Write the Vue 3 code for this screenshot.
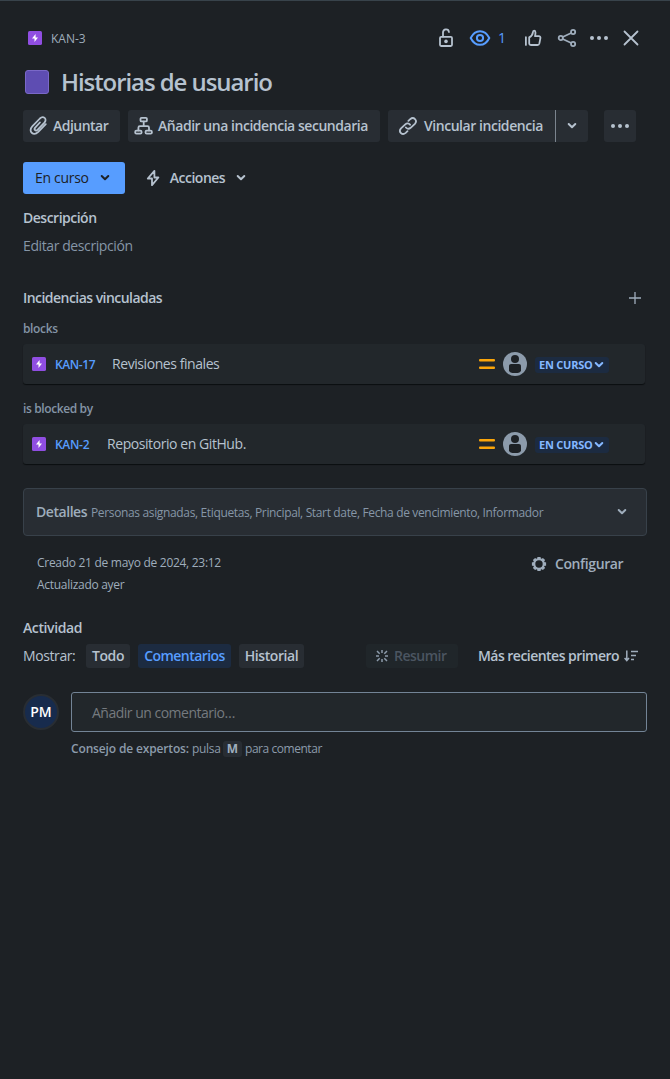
<script setup>
const groups = [
  { relation: 'blocks', relClass: 'rel-a', issueKey: 'KAN-17', keyClass: 'key-a', summary: 'Revisiones finales', sumClass: 'sum-a' },
  { relation: 'is blocked by', relClass: 'rel-b', issueKey: 'KAN-2', keyClass: 'key-b', summary: 'Repositorio en GitHub.', sumClass: 'sum-b' },
]
const boltPath = 'M7.6 3 4 7.6h2.5v3.4L10 6.4H7.6z'
const gearTeeth = [0, 45, 90, 135, 180, 225, 270, 315]
</script>

<template>
  <main class="issue">
    <header class="topbar">
      <svg class="epic" width="14" height="14" viewBox="0 0 14 14"><rect width="14" height="14" rx="1.6" /><path :d="boltPath" /></svg>
      <span class="crumb">KAN-3</span>
      <div class="tools">
        <svg width="16" height="20" viewBox="0 0 16 20" class="line"><rect x="2" y="8.9" width="12" height="9.1" rx="1.2" /><path d="M5 8.6V4.6C5 .4 10.6.4 10.9 4" /><circle class="solid" cx="8" cy="13.4" r="1.8" /></svg>
        <svg width="22" height="18" viewBox="0 0 22 18" class="line blue"><path d="M1.700 9C6.200 -.1 15.800 -.1 20.300 9 15.800 18.100 6.200 18.100 1.700 9z" /><circle cx="11" cy="9" r="3.1" /></svg>
        <span class="watchers">1</span>
        <svg width="18" height="18" viewBox="0 0 18 18" class="line thumb"><path d="M1.9 8.2v7.7M5.2 8.400c2-1 3.500-2.600 3.700-5 .1-1.300.5-1.700 1.200-1.700 1.700 0 1.600 2.600.9 5.500h3.700c1.400 0 1.900.9 1.700 2l-1 5.200c-.3 1.200-.9 1.600-2 1.600H7.200c-1.300 0-2-.7-2-1.800z" /></svg>
        <svg width="20" height="20" viewBox="0 0 20 20" class="line share"><circle cx="3.800" cy="10" r="2.100" /><circle cx="16.100" cy="4" r="2.100" /><circle cx="16.100" cy="16" r="2.100" /><path d="M5.700 9 14.200 5M5.700 11l8.500 4" /></svg>
        <svg width="20" height="6" viewBox="0 0 20 6" class="dots"><circle cx="3" cy="3" r="2" /><circle cx="10" cy="3" r="2" /><circle cx="17" cy="3" r="2" /></svg>
        <svg width="16" height="16" viewBox="0 0 16 16" class="line close"><path d="m1.500 1.500 13 13m0-13-13 13" /></svg>
      </div>
    </header>

    <div class="heading">
      <span class="swatch"></span>
      <h1>Historias de usuario</h1>
    </div>

    <div class="actions">
      <button class="btn attach">
        <svg width="20" height="20" viewBox="0 0 20 20" class="line"><path d="m10.900 6.500-4.700 5.100c-1.700 2 .5 3.900 2.300 2.200l6.900-7.200c3.300-3.800-1.200-7.300-4.500-4.100L3.500 10.200c-5 5.300 1 10.300 5.800 5.600l7.500-7.700" /></svg>
        <span>Adjuntar</span>
      </button>
      <button class="btn child">
        <svg width="20" height="20" viewBox="0 0 20 20" class="line"><rect x="6.500" y="1.800" width="6.400" height="3.600" rx="1" /><rect x="1.200" y="14.700" width="6.400" height="3" rx="1.200" /><rect x="11.500" y="14.700" width="6.400" height="3" rx="1.200" /><path d="M9.700 5.700v4.400M4.400 14.400v-2.700c0-1 .5-1.500 1.500-1.500h7.600c1 0 1.500.5 1.500 1.500v2.700" /></svg>
        <span>Añadir una incidencia secundaria</span>
      </button>
      <div class="split">
        <button class="btn link">
          <svg width="20" height="20" viewBox="0 0 20 20" class="line"><path d="M7.900 11.500c1.200 1.500 3.100 1.700 4.700.3l4.300-4c3-3.400-1.200-7.600-4.700-4.600L10.400 4.900M12 8.700C10.700 7.200 8.800 7 7.300 8.400L3 12.400c-3 3.400 1.300 7.500 4.700 4.500l1.800-1.700" /></svg>
          <span>Vincular incidencia</span>
        </button>
        <button class="btn caret"><svg width="10" height="8" viewBox="0 0 10 8" class="chev"><path d="m1.700 2 3.300 3.300L8.300 2" /></svg></button>
      </div>
      <button class="btn more"><svg width="20" height="6" viewBox="0 0 20 6" class="dots"><circle cx="3" cy="3" r="2" /><circle cx="10" cy="3" r="2" /><circle cx="17" cy="3" r="2" /></svg></button>
    </div>

    <div class="workflow">
      <button class="status"><span>En curso</span><svg width="10" height="8" viewBox="0 0 10 8" class="chev"><path d="m1.700 2 3.300 3.300L8.300 2" /></svg></button>
      <button class="auto">
        <svg width="14" height="18" viewBox="0 0 14 18" class="line"><path d="M8.400 1.800 1.800 9.500H6v6.700l6.400-7.700H8.400z" /></svg>
        <span>Acciones</span>
        <svg width="10" height="8" viewBox="0 0 10 8" class="chev"><path d="m1.700 2 3.300 3.300L8.300 2" /></svg>
      </button>
    </div>

    <section class="description">
      <h2 class="h-desc">Descripción</h2>
      <p>Editar descripción</p>
    </section>

    <section class="linked">
      <div class="linked-head">
        <h2 class="h-linked">Incidencias vinculadas</h2>
        <svg width="12" height="12" viewBox="0 0 12 12" class="plus"><path d="M6 0v12M0 6h12" /></svg>
      </div>
      <div v-for="g in groups" :key="g.issueKey" class="group">
        <h3><span :class="g.relClass">{{ g.relation }}</span></h3>
        <div class="card">
          <svg class="epic" width="14" height="14" viewBox="0 0 14 14"><rect width="14" height="14" rx="1.6" /><path :d="boltPath" /></svg>
          <span class="key" :class="g.keyClass">{{ g.issueKey }}</span>
          <span class="summary" :class="g.sumClass">{{ g.summary }}</span>
          <svg class="priority" width="16" height="12" viewBox="0 0 16 12"><rect y="1" width="16" height="2.500" rx="1" /><rect y="8.500" width="16" height="2.500" rx="1" /></svg>
          <svg class="person" width="24" height="24" viewBox="0 0 24 24"><circle class="bg" cx="12" cy="12" r="12" /><circle cx="12" cy="7" r="4" /><path d="M6 14.200c0-1.500.8-2.200 2.200-2.200h7.600c1.400 0 2.200.7 2.200 2.200v4c0 1.900-2.300 2.900-6 2.900s-6-1-6-2.900z" /></svg>
          <span class="lozenge"><span>EN CURSO</span><svg width="10" height="8" viewBox="0 0 10 8" class="chev"><path d="m1.700 2 3.300 3.300L8.300 2" /></svg></span>
        </div>
      </div>
    </section>

    <section class="details">
      <h2>Detalles</h2>
      <span class="fields">Personas asignadas, Etiquetas, Principal, Start date, Fecha de vencimiento, Informador</span>
      <svg width="10" height="8" viewBox="0 0 10 8" class="chev"><path d="m1.700 2 3.300 3.300L8.300 2" /></svg>
    </section>

    <div class="meta">
      <div class="dates">
        <span class="created">Creado 21 de mayo de 2024, 23:12</span>
        <span class="updated">Actualizado ayer</span>
      </div>
      <div class="configure">
        <svg width="16" height="16" viewBox="0 0 16 16"><circle class="ring" cx="8" cy="8" r="4.800" /><rect v-for="a in gearTeeth" :key="a" x="6.300" y=".9" width="3.400" height="2.800" rx=".5" :transform="`rotate(${a} 8 8)`" /></svg>
        <span>Configurar</span>
      </div>
    </div>

    <section class="activity">
      <h2 class="h-act">Actividad</h2>
      <div class="filters">
        <span class="show">Mostrar:</span>
        <button class="tab t-all"><span>Todo</span></button>
        <button class="tab t-comments"><span>Comentarios</span></button>
        <button class="tab t-history"><span>Historial</span></button>
        <button class="summarize">
          <svg width="12" height="12" viewBox="0 0 12 12"><path d="M6 0v3M6 9v3M0 6h3M9 6h3M1 1l2.700 2.700M8.300 8.300 11 11M11 1 8.300 3.700M3.700 8.300 1 11" /></svg>
          <span>Resumir</span>
        </button>
        <button class="sort">
          <span>Más recientes primero</span>
          <svg width="14" height="12" viewBox="0 0 14 12"><path d="M2.800.5v9M.6 8l2.200 2.600L5 8M7 1.500h7M7 5.500h5M7 9.500h3" /></svg>
        </button>
      </div>
      <div class="composer">
        <span class="avatar">PM</span>
        <div class="field"><span>Añadir un comentario…</span></div>
      </div>
      <p class="tip"><b>Consejo de expertos:</b><span class="press">pulsa</span><kbd>M</kbd><span class="rest">para comentar</span></p>
    </section>
  </main>
</template>

<style>
body { background: #1d2125; }
</style>

<style scoped>
* { box-sizing: border-box; }
.issue {
  height: 1079px;
  padding: 0 23px;
  border-top: 1px solid #38434b;
  background: #1d2125;
  color: #b6c2cf;
  font: 14px/20px "Open Sans", "Noto Sans", sans-serif;
  white-space: nowrap;
  overflow: hidden;
}
h1, h2, h3, p { margin: 0; }
h2 { font-size: 14px; line-height: 20px; font-weight: 600; }
button { border: 0; margin: 0; padding: 0; background: none; color: inherit; font: inherit; font-weight: 600; display: flex; align-items: center; }
svg { display: block; flex: none; }
.line { fill: none; stroke: #b6c2cf; stroke-width: 1.8; stroke-linejoin: round; stroke-linecap: round; }
.line .solid { fill: #b6c2cf; stroke: none; }
.dots { fill: #b6c2cf; }
.chev { fill: none; stroke: currentColor; stroke-width: 2; stroke-linecap: round; stroke-linejoin: round; }
.epic rect { fill: #904ee2; }
.epic path { fill: #fff; }

.topbar { display: flex; align-items: center; height: 30px; margin-top: 22px; padding: 0 8px 0 5px; }
.crumb { margin-left: 9px; padding-top: 2px; font-size: 12px; color: #9fadbc; }
.tools { display: flex; align-items: center; margin-left: auto; }
.line.blue { stroke: #579dff; margin-left: 15px; stroke-width: 2; }
.watchers { width: 8px; margin-left: 7px; color: #579dff; font-size: 14px; font-weight: 500; }
.thumb { margin-left: 18px; }
.share { margin-left: 15px; stroke: #9fadbc; }
.tools .dots { margin-left: 12px; }
.close { margin-left: 14px; }

.heading { display: flex; align-items: center; height: 28px; margin-top: 15px; padding-left: 2px; }
.swatch { width: 24px; height: 24px; border: 1px solid #7a68c8; border-radius: 3px; background: #5e4db2; }
h1 { margin-left: 12px; font-size: 24px; line-height: 28px; font-weight: 600; letter-spacing: -1.07px; }

.actions { display: flex; gap: 8px; margin-top: 14px; }
.btn { height: 32px; border-radius: 3px; background: #282d33; }
.attach { width: 97px; padding-left: 6px; }
.attach span { margin-left: 4px; letter-spacing: -.52px; }
.child { width: 252px; padding-left: 6px; }
.child span { margin-left: 4px; letter-spacing: -.46px; }
.split { display: flex; width: 200px; }
.link { width: 167px; padding-left: 10px; border-radius: 3px 0 0 3px; }
.link span { margin-left: 6px; letter-spacing: -.45px; }
.caret { width: 33px; justify-content: center; border-left: 1px solid #7b848e; border-radius: 0 3px 3px 0; }
.more { width: 32px; margin-left: 8px; justify-content: center; }

.workflow { display: flex; height: 32px; margin-top: 20px; }
.status { width: 102px; padding-left: 12px; border-radius: 3px; background: #579dff; color: #1d2125; font-weight: 400; }
.status .chev { margin-left: auto; margin-right: 15px; }
.status span { letter-spacing: -.3px; }
.auto { margin-left: 21px; }
.auto span { width: 57px; margin-left: 9px; letter-spacing: -.5px; }
.auto .chev { margin-left: 10px; }

.description { margin-top: 14px; }
.description p { margin-top: 8px; color: #8696a7; letter-spacing: -.4px; }
.h-desc { letter-spacing: -.5px; }

.linked { margin-top: 32px; }
.linked-head { display: flex; justify-content: space-between; align-items: center; height: 20px; padding-right: 6px; }
.h-linked { letter-spacing: -.54px; }
.plus { fill: none; stroke: #9fadbc; stroke-width: 1.3; }
.group { height: 80px; padding-top: 12px; }
.group h3 { height: 16px; margin: 0 0 8px; font-size: 12px; line-height: 18px; font-weight: 600; color: #8494a5; }
.rel-a { letter-spacing: -.35px; }
.rel-b { letter-spacing: -.38px; }
.card { display: flex; align-items: center; width: 622px; height: 40px; padding-left: 9px; border-radius: 3px; background: #22272b; box-shadow: 0 1px 1px #0b0e10; }
.key { margin-left: 9px; padding-top: 2px; color: #579dff; font-size: 12px; font-weight: 600; }
.key-a { width: 57px; letter-spacing: -.4px; }
.key-b { width: 52px; letter-spacing: -.3px; }
.summary { letter-spacing: -.43px; }
.priority { margin-left: auto; fill: #faa50a; }
.person { margin-left: 8px; fill: #1d2125; }
.person .bg { fill: #8c9bab; }
.lozenge { display: flex; align-items: center; width: 74px; height: 16px; margin: 2px 36px 0 8px; padding-left: 4px; border-radius: 3px; background: #1c2b41; color: #85b8ff; font-size: 11px; line-height: 16px; font-weight: 700; }
.lozenge span { width: 54px; letter-spacing: -.22px; }
.lozenge .chev { margin-left: 1px; }

.details { display: flex; align-items: center; height: 48px; margin-top: 20px; padding: 0 19px 0 12px; border: 1px solid #38414a; border-radius: 4px; background: #282d33; color: #9fadbc; }
.details h2 { width: 55px; letter-spacing: -.45px; }
.fields { padding-top: 2px; font-size: 12px; color: #8696a7; letter-spacing: -.352px; }
.details .chev { margin-left: auto; }

.meta { display: flex; justify-content: space-between; height: 60px; padding: 16px 24px 0 14px; color: #9fadbc; }
.dates { display: flex; flex-direction: column; font-size: 12px; line-height: 22px; letter-spacing: -.29px; }
.configure { display: flex; height: 24px; align-items: center; font-weight: 600; }
.configure svg { fill: #9fadbc; }
.configure .ring { fill: none; stroke: #9fadbc; stroke-width: 2.200; }
.configure span { width: 68px; margin-left: 8px; letter-spacing: -.4px; }

.activity { margin-top: 22px; }
.h-act { letter-spacing: -.4px; }
.filters { display: flex; align-items: center; height: 24px; margin-top: 6px; }
.show { width: 63px; letter-spacing: -.4px; }
.tab { height: 24px; margin-right: 8px; justify-content: center; border-radius: 3px; background: #282d33; letter-spacing: -.4px; }
.t-all { width: 44px; }
.t-comments { width: 93px; background: #1c2b41; color: #579dff; letter-spacing: -.55px; }
.t-history { width: 65px; }
.summarize { width: 92px; height: 24px; margin-left: 54px; padding-left: 10px; border-radius: 3px; background: #20262a; color: #4b5561; }
.summarize svg { stroke: #8c9bab; stroke-width: 1.500; }
.summarize span { margin-left: 6px; letter-spacing: -.5px; }
.sort { margin-left: 20px; }
.sort span { width: 141px; letter-spacing: -.53px; }
.sort svg { margin-left: 5px; fill: none; stroke: #9fadbc; stroke-width: 1.500; }
.composer { display: flex; align-items: center; height: 40px; margin-top: 24px; }
.avatar { width: 36px; height: 36px; border: 2px solid #282d33; border-radius: 50%; background: #172b4d; color: #fff; font-weight: 600; line-height: 32px; text-align: center; }
.field { display: flex; align-items: center; width: 576px; height: 40px; margin-left: 12px; padding: 1px 0 0 20px; border: 1px solid #738496; border-radius: 3px; background: #22272b; color: #757a7f; }
.field span { letter-spacing: -.5px; }
.tip { display: flex; align-items: center; height: 16px; margin: 9px 0 0 48px; color: #8c9bab; font-size: 12px; line-height: 16px; }
.tip b { width: 121px; font-weight: 600; letter-spacing: -.15px; }
.press { width: 31px; letter-spacing: -.3px; }
kbd { width: 19px; height: 16px; margin-right: 3px; border-radius: 3px; background: #282d33; color: #9fadbc; font: 700 12px/16px "Open Sans", sans-serif; text-align: center; }
.rest { letter-spacing: -.45px; }
</style>
